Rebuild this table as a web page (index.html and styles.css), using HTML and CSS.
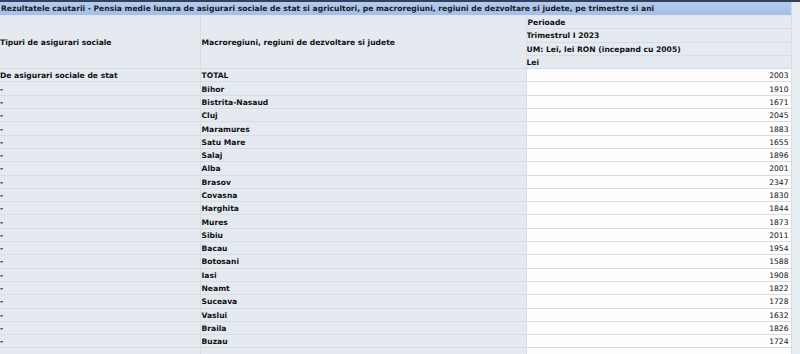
FILE: index.html
```html
<!DOCTYPE html>
<html>
<head>
<meta charset="utf-8">
<link rel="stylesheet" href="styles.css">
</head>
<body>
<div class="topline"></div>
<div class="page">
  <div class="main">
    <div class="title">Rezultatele cautarii - Pensia medie lunara de asigurari sociale de stat si agricultori, pe macroregiuni, regiuni de dezvoltare si judete, pe trimestre si ani</div>
    <table class="grid">
      <colgroup><col class="c1"><col class="c2"><col class="c3"></colgroup>
      <tr><th rowspan="4" class="hd">Tipuri de asigurari sociale</th><th rowspan="4" class="hd">Macroregiuni, regiuni de dezvoltare si judete</th><th class="hd">Perioade</th></tr>
      <tr><th class="hd">Trimestrul I 2023</th></tr>
      <tr><th class="hd">UM: Lei, lei RON (incepand cu 2005)</th></tr>
      <tr><th class="hd">Lei</th></tr>
      <tr><th>De asigurari sociale de stat</th><th>TOTAL</th><td>2003</td></tr>
      <tr><th>-</th><th>Bihor</th><td>1910</td></tr>
      <tr><th>-</th><th>Bistrita-Nasaud</th><td>1671</td></tr>
      <tr><th>-</th><th>Cluj</th><td>2045</td></tr>
      <tr><th>-</th><th>Maramures</th><td>1883</td></tr>
      <tr><th>-</th><th>Satu Mare</th><td>1655</td></tr>
      <tr><th>-</th><th>Salaj</th><td>1896</td></tr>
      <tr><th>-</th><th>Alba</th><td>2001</td></tr>
      <tr><th>-</th><th>Brasov</th><td>2347</td></tr>
      <tr><th>-</th><th>Covasna</th><td>1830</td></tr>
      <tr><th>-</th><th>Harghita</th><td>1844</td></tr>
      <tr><th>-</th><th>Mures</th><td>1873</td></tr>
      <tr><th>-</th><th>Sibiu</th><td>2011</td></tr>
      <tr><th>-</th><th>Bacau</th><td>1954</td></tr>
      <tr><th>-</th><th>Botosani</th><td>1588</td></tr>
      <tr><th>-</th><th>Iasi</th><td>1908</td></tr>
      <tr><th>-</th><th>Neamt</th><td>1822</td></tr>
      <tr><th>-</th><th>Suceava</th><td>1728</td></tr>
      <tr><th>-</th><th>Vaslui</th><td>1632</td></tr>
      <tr><th>-</th><th>Braila</th><td>1826</td></tr>
      <tr><th>-</th><th>Buzau</th><td>1724</td></tr>
      <tr class="empty"><th></th><th></th><td></td></tr>
    </table>
  </div>
  <div class="side"></div>
</div>
</body>
</html>
```
FILE: styles.css
```css
html, body {
  margin: 0;
  padding: 0;
  background: #e6ecf2;
  overflow: hidden;
}
body {
  font-family: "DejaVu Sans", Verdana, sans-serif;
  font-size: 7.6px;
  color: #111;
}
.topline {
  height: 2px;
  background: #34405a;
}
.page {
  display: flex;
}
.main {
  width: 791px;
  flex: none;
  border-right: 1px solid #d3dae2;
}
.side {
  flex: 1;
  background: #e8edf2;
}
.title {
  height: 13px;
  line-height: 13px;
  padding-left: 1px;
  font-weight: bold;
  background: linear-gradient(#b3cbee, #a3bfe8);
  color: #1a1a1a;
  white-space: nowrap;
  overflow: hidden;
  border-bottom: 1px solid #dfe6ee;
}
.grid {
  width: 791px;
  border-collapse: collapse;
  table-layout: fixed;
}
.c1 { width: 200px; }
.c2 { width: 326px; }
.c3 { width: 265px; }
.grid tr { height: 12.3px; }
.grid th, .grid td {
  padding: 1px 0 0 1px;
  height: 11.3px;
  line-height: 11px;
  border: 1px solid #d5dde5;
  border-left: none;
  border-top: none;
  white-space: nowrap;
  overflow: hidden;
  vertical-align: middle;
}
.grid th {
  background: #e4eaf0;
  text-align: left;
  font-weight: bold;
}
.grid th:first-child { padding-left: 0; }
.grid td {
  background: #fdfdfd;
  text-align: right;
  padding-right: 2px;
  font-weight: normal;
}
```
